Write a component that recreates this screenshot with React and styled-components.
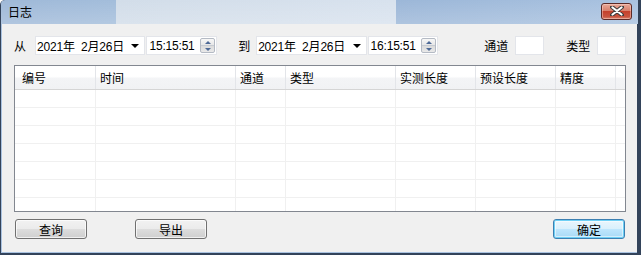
import styled, { createGlobalStyle, css } from "styled-components";

const GlobalStyle = createGlobalStyle`
  html, body {
    margin: 0;
    padding: 0;
    background: #ffffff;
  }
  body {
    font-family: "Liberation Sans", "Noto Sans CJK SC", sans-serif;
    font-size: 12px;
    color: #000;
  }
`;

const Window = styled.div`
  width: 641px;
  height: 255px;
  display: flex;
  flex-direction: column;
  box-sizing: border-box;
  overflow: hidden;
  background: #33435a;
  border-top-left-radius: 5px;
`;

const TitleBar = styled.div`
  height: 24px;
  flex: none;
  display: flex;
  align-items: center;
  justify-content: space-between;
  padding: 0 6px 0 7px;
  margin: 0 3px 0 1px;
  background:
    linear-gradient(to bottom, rgba(255, 255, 255, 0) 0%, rgba(255, 255, 255, 0.18) 100%),
    linear-gradient(
      to right,
      #9fb9d8 0,
      #a3bddb 115px,
      #d2dde9 115px,
      #d8e2ee 395px,
      #9cb7d8 395px,
      #a9c2e0 100%
    );
  border-top-left-radius: 4px;
`;

const Title = styled.span`
  font-family: "Noto Sans CJK SC", sans-serif;
  font-size: 12px;
  line-height: 24px;
  color: #000;
`;

const CloseButton = styled.div`
  width: 31px;
  height: 17px;
  margin-top: -2px;
  box-sizing: border-box;
  border: 1px solid #5c2a27;
  border-radius: 3px;
  display: flex;
  align-items: center;
  justify-content: center;
  background: linear-gradient(
    to bottom,
    #e9a999 0%,
    #d8806c 45%,
    #c4412c 50%,
    #c85540 85%,
    #d98872 100%
  );
  box-shadow: inset 0 0 0 1px rgba(255, 220, 210, 0.45);
`;

const Body = styled.div`
  flex: 1;
  display: flex;
  flex-direction: column;
  background: #f0f0f0;
  margin: 0 4px 2px 1px;
  padding: 0 11px 0 12px;
  border-left: 1px solid #a9c2e0;
  border-bottom: 1px solid #a9c2e0;
`;

const FilterRow = styled.div`
  display: flex;
  align-items: center;
  height: 19px;
  margin-top: 12px;
`;

const Label = styled.span`
  font-family: "Noto Sans CJK SC", sans-serif;
  font-size: 12px;
  line-height: 19px;
  margin-left: ${(p) => p.$gap || 0}px;
  white-space: nowrap;
`;

const Field = styled.div`
  position: relative;
  height: 19px;
  width: ${(p) => p.$w}px;
  margin-left: ${(p) => p.$gap || 0}px;
  box-sizing: border-box;
  background: #fff;
  border: 1px solid #e3e5ea;
  display: flex;
  align-items: center;
  padding-left: ${(p) => p.$pad || 1}px;
  font-size: 12px;
  white-space: nowrap;
`;

const DateText = styled.span`
  font-family: "Liberation Sans", "Noto Sans CJK SC", sans-serif;
  font-size: 12px;
  letter-spacing: -0.2px;
  white-space: pre;
`;

const DropArrow = styled.span`
  margin-left: auto;
  margin-right: 5px;
  width: 0;
  height: 0;
  border-left: 4px solid transparent;
  border-right: 4px solid transparent;
  border-top: 4px solid #000;
`;

const Spin = styled.div`
  margin-left: auto;
  margin-right: 1px;
  width: 15px;
  height: 15px;
  box-sizing: border-box;
  border: 1px solid #b4bac4;
  border-radius: 2px;
  display: flex;
  flex-direction: column;
  background: linear-gradient(to bottom, #f7f7f7 0%, #e6e6e6 50%, #dadada 51%, #e9e9e9 100%);
`;

const SpinHalf = styled.div`
  flex: 1;
  display: flex;
  align-items: center;
  justify-content: center;
  ${(p) =>
    p.$down &&
    css`
      border-top: 1px solid #c6cbd3;
    `}
`;

const SpinArrow = styled.span`
  width: 0;
  height: 0;
  border-left: 3px solid transparent;
  border-right: 3px solid transparent;
  ${(p) =>
    p.$down
      ? css`
          border-top: 3px solid #4e6a97;
        `
      : css`
          border-bottom: 3px solid #4e6a97;
        `}
`;

const SmallInput = styled.div`
  width: 29px;
  height: 19px;
  margin-left: ${(p) => p.$gap || 0}px;
  box-sizing: border-box;
  background: #fff;
  border: 1px solid #e3e5ea;
`;

const Table = styled.div`
  margin-top: 10px;
  width: 612px;
  height: 147px;
  box-sizing: border-box;
  border: 1px solid #828790;
  background: #fff;
  overflow: hidden;
`;

const cols = [81, 140, 50, 110, 80, 80, 60];

const HeaderRow = styled.div`
  display: flex;
  height: 23px;
  border-bottom: 1px solid #d5d5d5;
  background: linear-gradient(to bottom, #ffffff 0%, #ffffff 45%, #f3f4f6 55%, #f1f2f4 100%);
`;

const HeaderCell = styled.div`
  flex: none;
  width: ${(p) => p.$w}px;
  box-sizing: border-box;
  padding-left: ${(p) => (p.$first ? 7 : 4)}px;
  border-right: 1px solid #e3e5e9;
  font-family: "Noto Sans CJK SC", sans-serif;
  font-size: 12px;
  line-height: 23px;
  white-space: nowrap;
`;

const HeaderFill = styled.div`
  flex: 1;
`;

const Row = styled.div`
  display: flex;
  height: 18px;
  border-bottom: 1px solid #f0f0f0;
  box-sizing: border-box;
`;

const Cell = styled.div`
  flex: none;
  width: ${(p) => p.$w}px;
  box-sizing: border-box;
  border-right: 1px solid #f0f0f0;
`;

const ButtonRow = styled.div`
  display: flex;
  margin-top: 7px;
  height: 20px;
  padding-left: 1px;
`;

const Button = styled.div`
  width: 72px;
  height: 20px;
  margin-left: ${(p) => p.$gap || 0}px;
  box-sizing: border-box;
  border: 1px solid #707070;
  border-radius: 3px;
  display: flex;
  align-items: center;
  justify-content: center;
  font-family: "Noto Sans CJK SC", sans-serif;
  font-size: 12px;
  background: linear-gradient(to bottom, #f2f2f2 0%, #ebebeb 50%, #dddddd 51%, #cfcfcf 100%);
  box-shadow: inset 0 0 0 1px rgba(255, 255, 255, 0.7);
  ${(p) =>
    p.$primary &&
    css`
      margin-left: auto;
      margin-right: 1px;
      border-color: #3c7fb1;
      background: linear-gradient(to bottom, #eaf6fd 0%, #d9f0fc 50%, #bee6fd 51%, #a7d9f5 100%);
      box-shadow: inset 0 0 0 1px #6ed0f5, inset 0 0 0 2px rgba(255, 255, 255, 0.5);
    `}
`;

function DateTime({ date, time, gap }) {
  return (
    <>
      <Field $w={111} $gap={gap}>
        <DateText>{date}</DateText>
        <DropArrow />
      </Field>
      <Field $w={71} $gap={1} $pad={2}>
        <DateText>{time}</DateText>
        <Spin>
          <SpinHalf>
            <SpinArrow />
          </SpinHalf>
          <SpinHalf $down>
            <SpinArrow $down />
          </SpinHalf>
        </Spin>
      </Field>
    </>
  );
}

const headers = ["编号", "时间", "通道", "类型", "实测长度", "预设长度", "精度"];

export default function App() {
  return (
    <>
      <GlobalStyle />
      <Window>
        <TitleBar>
          <Title>日志</Title>
          <CloseButton>
            <svg width="14" height="10" viewBox="0 0 14 10">
              <path d="M2 1 L12 9 M12 1 L2 9" stroke="#3b3b3b" strokeWidth="4" strokeLinecap="round" />
              <path d="M2.5 1.5 L11.5 8.5 M11.5 1.5 L2.5 8.5" stroke="#ffffff" strokeWidth="2.2" strokeLinecap="round" />
            </svg>
          </CloseButton>
        </TitleBar>
        <Body>
          <FilterRow>
            <Label>从</Label>
            <DateTime date="2021年  2月26日" time="15:15:51" gap={9} />
            <Label $gap={21}>到</Label>
            <DateTime date="2021年  2月26日" time="16:15:51" gap={6} />
            <Label $gap={46}>通道</Label>
            <SmallInput $gap={7} />
            <Label $gap={22}>类型</Label>
            <SmallInput $gap={7} />
          </FilterRow>
          <Table>
            <HeaderRow>
              {headers.map((h, i) => (
                <HeaderCell key={h} $w={cols[i]} $first={i === 0}>
                  {h}
                </HeaderCell>
              ))}
              <HeaderFill />
            </HeaderRow>
            {Array.from({ length: 7 }).map((_, r) => (
              <Row key={r}>
                {cols.map((w, i) => (
                  <Cell key={i} $w={w} />
                ))}
              </Row>
            ))}
          </Table>
          <ButtonRow>
            <Button>查询</Button>
            <Button $gap={48}>导出</Button>
            <Button $primary>确定</Button>
          </ButtonRow>
        </Body>
      </Window>
    </>
  );
}
